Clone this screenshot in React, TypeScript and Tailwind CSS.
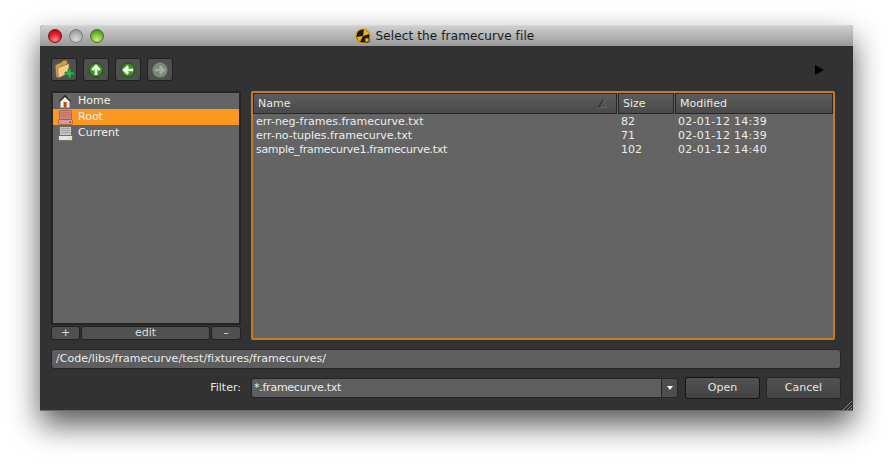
import React from 'react';

const font = "font-['DejaVu_Sans',sans-serif]";

const Light = ({ tone }: { tone: 'red' | 'grey' | 'green' }) => {
    const cls = {
        red: 'bg-[radial-gradient(circle_at_50%_80%,#ff9090_0%,#ec1c28_50%,#9c0a12_100%)] border-[#6e1a20]',
        grey: 'bg-[radial-gradient(circle_at_50%_80%,#dcdcdc_0%,#b4b4b4_50%,#8a8a8a_100%)] border-[#7c7c7c]',
        green: 'bg-[radial-gradient(circle_at_50%_80%,#c8f088_0%,#78c02e_50%,#357c12_100%)] border-[#44702a]',
    }[tone];
    return <div className={`w-[14px] h-[14px] rounded-full border ${cls}`} />;
};

const NukeLogo = () => (
    <svg width="16" height="16" viewBox="0 0 16 16">
        <circle cx="8" cy="8" r="7.8" fill="#e8a810" />
        <circle cx="8" cy="8" r="6.6" fill="#1a1a1a" />
        <path d="M8 8 L9 1.6 A6.6 6.6 0 0 1 14.2 6 Z" fill="#f0b010" />
        <path d="M8 8 L1.8 9 A6.6 6.6 0 0 0 5 13.8 Z" fill="#f0b010" />
        <circle cx="12" cy="12" r="2.4" fill="#f0b010" stroke="#1a1a1a" />
    </svg>
);

const ArrowCircle = ({ d, dim }: { d: string; dim?: boolean }) => (
    <svg width="16" height="16" viewBox="0 0 16 16" className={dim ? 'opacity-50' : ''}>
        <circle cx="8" cy="8" r="7.5" fill={dim ? '#a8cfa0' : '#1f5c10'} />
        <circle cx="8" cy="8" r="6.2" fill={dim ? '#9ac892' : '#3c9420'} />
        <path d={d} fill="none" stroke="#fff" strokeWidth="2.6" strokeLinejoin="miter" />
    </svg>
);

const FolderAdd = () => (
    <svg width="21" height="21" viewBox="0 0 21 21">
        <path d="M1 6 L8 3 L8 1.5 L13 1 L14 14 L4 19 L2 18 Z" fill="#c9a05a" stroke="#6d5228" strokeWidth="0.7" />
        <path d="M3.5 9 L15 4.5 L15 14 L4.5 19 Z" fill="#f2cf84" stroke="#8a6a32" strokeWidth="0.7" />
        <path d="M14 10 h3 v3 h3 v3 h-3 v3 h-3 v-3 h-3 v-3 h3 Z" fill="#2fb04a" stroke="#14702a" strokeWidth="0.7" />
    </svg>
);

const HomeIcon = () => (
    <svg width="14" height="14" viewBox="0 0 14 14">
        <path d="M0.5 7.5 L7 0.8 L13.5 7.5 L11.5 7.5 L7 3 L2.5 7.5 Z" fill="#2a2a2a" />
        <path d="M2.5 7.5 L7 3 L11.5 7.5 L11.5 13.5 L2.5 13.5 Z" fill="#f4f0e6" />
        <rect x="5.6" y="8" width="3" height="5.5" fill="#b8441a" />
        <rect x="10.5" y="1.5" width="1.2" height="3.5" fill="#777" />
    </svg>
);

const DriveIcon = ({ tint }: { tint: 'red' | 'grey' }) => {
    const c = tint === 'red'
        ? { a: '#d08480', b: '#bc6a66', c: '#8a4a46', d: '#dc9a94' }
        : { a: '#c4c4c4', b: '#9a9a9a', c: '#4c4c4c', d: '#e4e4e4' };
    return (
        <svg width="15" height="15" viewBox="0 0 15 15">
            <rect x="1.5" y="0.5" width="12" height="9" rx="1" fill={c.a} stroke={c.c} strokeWidth="0.6" />
            <path d="M3 2.5 H12 M3 4.5 H12 M3 6.5 H12" stroke={c.b} strokeWidth="0.8" />
            <rect x="0.5" y="9.5" width="14" height="5" rx="1" fill={c.d} stroke={c.c} strokeWidth="0.6" />
            <rect x="11.5" y="11.5" width="1.5" height="1.5" fill={tint === 'red' ? '#8f4643' : '#d8d040'} />
        </svg>
    );
};

const ToolButton = ({ children }: { children: React.ReactNode }) => (
    <div className="w-[26px] h-[23px] flex items-center justify-center rounded-[3px] border border-[#222] bg-[#505050]">
        {children}
    </div>
);

const SideRow = ({ icon, label, selected }: { icon: React.ReactNode; label: string; selected?: boolean }) => (
    <div className={`h-4 flex items-center ${selected ? 'bg-[#fb9820]' : ''}`}>
        <div className="w-[25px] pl-[5px] flex items-center shrink-0">{icon}</div>
        <span className="text-[#f0f0f0]">{label}</span>
    </div>
);

const HeaderCell = ({ label, className, children }: { label: string; className: string; children?: React.ReactNode }) => (
    <div className={`h-[21px] flex items-center justify-between pl-[4px] pr-[9px] border border-[#262626] bg-linear-to-b from-[#5c5c5c] to-[#4a4a4a] text-[#e8e8e8] ${className}`}>
        <span>{label}</span>
        {children}
    </div>
);

const files = [
    { name: 'err-neg-frames.framecurve.txt', size: '82', date: '02-01-12 14:39', cls: '' },
    { name: 'err-no-tuples.framecurve.txt', size: '71', date: '02-01-12 14:39', cls: '' },
    { name: 'sample_framecurve1.framecurve.txt', size: '102', date: '02-01-12 14:40', cls: 'tracking-[-0.32px]' },
];

const SmallButton = ({ label, className }: { label: string; className: string }) => (
    <div className={`h-[14px] flex items-center justify-center rounded-[3px] border border-[#222] bg-[#505050] text-[#dcdcdc] ${className}`}>
        {label}
    </div>
);

const App: React.FC = () => {
    return (
        <div className={`w-[892px] h-[465px] bg-white pt-[25px] pl-[40px] overflow-hidden text-[11px] leading-[14px] ${font}`}>
            <div className="w-[813px] h-[386px] flex flex-col rounded-t-[4px] border-b border-[#6a6a6a] bg-[#323232] shadow-[0_14px_30px_rgba(0,0,0,0.65)]">
                <div className="h-[21px] shrink-0 relative flex items-center justify-center gap-[5px] pr-[4px] rounded-t-[4px] border-t border-[#d8d8d8] bg-linear-to-b from-[#cfcfcf] to-[#999999] text-[#1a1a1a] text-[12px] tracking-[0.12px]">
                    <div className="absolute left-[8px] top-[3px] flex gap-[7px]">
                        <Light tone="red" />
                        <Light tone="grey" />
                        <Light tone="green" />
                    </div>
                    <NukeLogo />
                    <span>Select the framecurve file</span>
                </div>

                <div className="flex-1 flex flex-col pl-[11px] pr-[12px]">
                    <div className="h-[23px] mt-[12px] flex items-center gap-[6px] relative">
                        <ToolButton><FolderAdd /></ToolButton>
                        <ToolButton><ArrowCircle d="M8 13 V4.5 M4.2 8.2 L8 4.2 L11.8 8.2" /></ToolButton>
                        <ToolButton><ArrowCircle d="M13 8 H4.5 M8.2 4.2 L4.2 8 L8.2 11.8" /></ToolButton>
                        <ToolButton><ArrowCircle dim d="M3 8 H11.5 M7.8 4.2 L11.8 8 L7.8 11.8" /></ToolButton>
                        <div className="ml-auto mr-[17px] w-0 h-0 border-y-[5px] border-y-transparent border-l-[9px] border-l-black" />
                    </div>

                    <div className="mt-[10px] flex gap-[10px] h-[249px]">
                        <div className="w-[190px] flex flex-col">
                            <div className="h-[234px] border-2 border-[#262626] rounded-[2px] bg-[#646464]">
                                <SideRow icon={<HomeIcon />} label="Home" />
                                <SideRow icon={<DriveIcon tint="red" />} label="Root" selected />
                                <SideRow icon={<DriveIcon tint="grey" />} label="Current" />
                            </div>
                            <div className="mt-[1px] flex gap-[1px]">
                                <SmallButton label="+" className="w-[29px]" />
                                <SmallButton label="edit" className="flex-1" />
                                <SmallButton label="–" className="w-[30px]" />
                            </div>
                        </div>

                        <div className="w-[584px] border-2 border-[#c87a1e] rounded-[2px] bg-[#646464] text-[#ececec]">
                            <div className="flex gap-[1px]">
                                <HeaderCell label="Name" className="w-[364px]">
                                    <svg width="9" height="9" viewBox="0 0 9 9">
                                        <path d="M0.5 8.5 L5 0.5" stroke="#242424" strokeWidth="1" />
                                        <path d="M5 0.5 L9 8.5 H0.5" fill="none" stroke="#5e5e5e" strokeWidth="1" />
                                    </svg>
                                </HeaderCell>
                                <HeaderCell label="Size" className="w-[56px]" />
                                <HeaderCell label="Modified" className="flex-1" />
                            </div>
                            <div className="pt-[1px]">
                                {files.map(f => (
                                    <div key={f.name} className="h-[14px] flex">
                                        <span className={`w-[368px] pl-[3px] ${f.cls}`}>{f.name}</span>
                                        <span className="w-[57px]">{f.size}</span>
                                        <span className="tracking-[0.28px]">{f.date}</span>
                                    </div>
                                ))}
                            </div>
                        </div>
                    </div>

                    <div className="mt-[9px] h-[20px] w-[790px] flex items-center pl-[4px] rounded-[3px] border border-[#262626] bg-[#5e5e5e] text-[#ececec] tracking-[0.04px]">
                        /Code/libs/framecurve/test/fixtures/framecurves/
                    </div>

                    <div className="mt-[8px] w-[790px] h-[22px] flex items-center">
                        <span className="w-[200px] pr-[10px] text-right text-[#e8e8e8]">Filter:</span>
                        <div className="flex h-[20px] w-[427px]">
                            <div className="flex-1 flex items-center pl-[2px] rounded-l-[3px] border border-[#262626] bg-[#5e5e5e] text-[#ececec] tracking-[-0.25px]">*.framecurve.txt</div>
                            <div className="w-[16px] flex items-center justify-center rounded-r-[3px] border border-[#262626] border-l-0 bg-[#4e4e4e]">
                                <div className="w-0 h-0 border-x-[3.5px] border-x-transparent border-t-[4px] border-t-white" />
                            </div>
                        </div>
                        <div className="ml-[7px] w-[75px] h-[22px] flex items-center justify-center rounded-[3px] border border-[#141414] bg-linear-to-b from-[#525252] to-[#424242] text-[#e4e4e4]">Open</div>
                        <div className="ml-[6px] w-[75px] h-[22px] flex items-center justify-center rounded-[3px] border border-[#262626] bg-linear-to-b from-[#525252] to-[#444444] text-[#e4e4e4]">Cancel</div>
                    </div>
                </div>
                <svg width="10" height="10" viewBox="0 0 10 10" className="absolute left-[842px] top-[400px]">
                    <path d="M1 10 L10 1 M5 10 L10 5 M8 10 L10 8" stroke="#9a9a9a" strokeWidth="0.8" />
                </svg>
            </div>
        </div>
    );
};

export default App;
